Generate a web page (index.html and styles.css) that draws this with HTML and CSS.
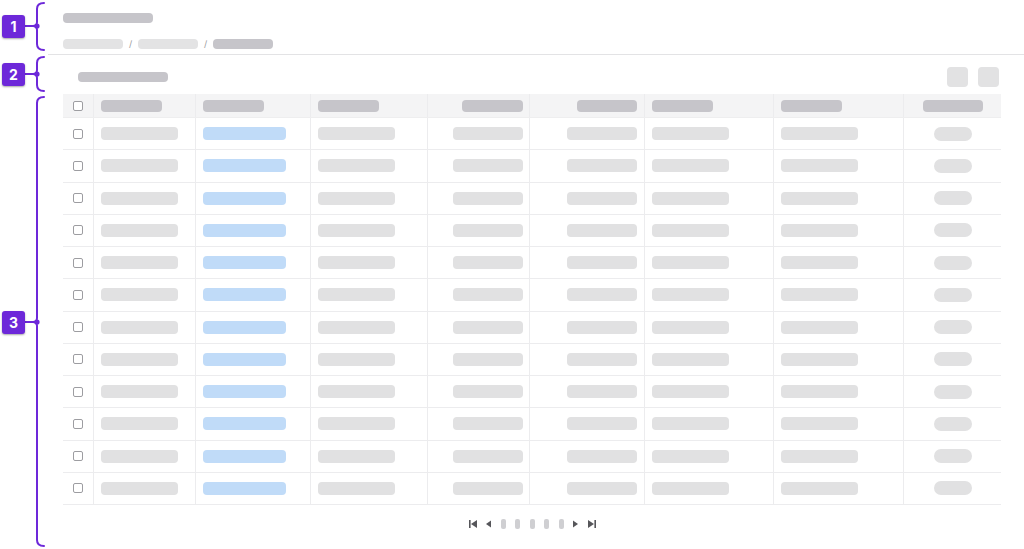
FILE: index.html
```html
<!DOCTYPE html>
<html lang="en">
<head>
<meta charset="utf-8">
<title>Table skeleton</title>
<link rel="stylesheet" href="styles.css">
</head>
<body>
<div class="page">
  <div class="annot">
    <svg class="braces" width="48" height="549" viewBox="0 0 48 549">
      <g fill="none" stroke="#6d28d9" stroke-width="2" stroke-linecap="round">
        <path d="M44 3 Q37 3 37 9 L37 22 Q37 26 33 26 Q37 26 37 30 L37 44 Q37 50 44 50"/>
        <path d="M44 57 Q37 57 37 63 L37 70 Q37 74 33 74 Q37 74 37 78 L37 85 Q37 91 44 91"/>
        <path d="M44 97 Q37 97 37 103 L37 318 Q37 322 33 322 Q37 322 37 326 L37 540 Q37 546 44 546"/>
        <path d="M25 26 H37 M25 74 H37 M25 322 H37"/>
      </g>
      <g fill="#6d28d9">
        <circle cx="37" cy="26" r="2.6"/>
        <circle cx="37" cy="74" r="2.6"/>
        <circle cx="37" cy="322" r="2.6"/>
      </g>
    </svg>
    <span class="badge b1">1</span>
    <span class="badge b2">2</span>
    <span class="badge b3">3</span>
  </div>

  <main class="main">
    <header class="head">
      <div class="sk sk-title"></div>
      <nav class="crumbs">
        <span class="sk crumb"></span><span class="sep">/</span>
        <span class="sk crumb"></span><span class="sep">/</span>
        <span class="sk crumb crumb-cur"></span>
      </nav>
    </header>

    <div class="toolbar">
      <div class="sk sk-tool"></div>
      <div class="tools"><span class="tbtn"></span><span class="tbtn"></span></div>
    </div>

    <div class="table">
      <div class="row hrow">
        <div class="cell c-chk"><span class="chk"></span></div>
        <div class="cell"><span class="sk hp"></span></div>
        <div class="cell"><span class="sk hp"></span></div>
        <div class="cell"><span class="sk hp"></span></div>
        <div class="cell right r4"><span class="sk hp"></span></div>
        <div class="cell right"><span class="sk hp hp60"></span></div>
        <div class="cell"><span class="sk hp"></span></div>
        <div class="cell"><span class="sk hp"></span></div>
        <div class="cell center"><span class="sk hp hp60"></span></div>
      </div>

      <div class="row"><div class="cell c-chk"><span class="chk"></span></div><div class="cell"><span class="sk bp"></span></div><div class="cell"><span class="sk bp blue"></span></div><div class="cell"><span class="sk bp"></span></div><div class="cell right r4"><span class="sk bp num"></span></div><div class="cell right"><span class="sk bp num"></span></div><div class="cell"><span class="sk bp"></span></div><div class="cell"><span class="sk bp"></span></div><div class="cell center"><span class="sk pill"></span></div></div>
      <div class="row"><div class="cell c-chk"><span class="chk"></span></div><div class="cell"><span class="sk bp"></span></div><div class="cell"><span class="sk bp blue"></span></div><div class="cell"><span class="sk bp"></span></div><div class="cell right r4"><span class="sk bp num"></span></div><div class="cell right"><span class="sk bp num"></span></div><div class="cell"><span class="sk bp"></span></div><div class="cell"><span class="sk bp"></span></div><div class="cell center"><span class="sk pill"></span></div></div>
      <div class="row"><div class="cell c-chk"><span class="chk"></span></div><div class="cell"><span class="sk bp"></span></div><div class="cell"><span class="sk bp blue"></span></div><div class="cell"><span class="sk bp"></span></div><div class="cell right r4"><span class="sk bp num"></span></div><div class="cell right"><span class="sk bp num"></span></div><div class="cell"><span class="sk bp"></span></div><div class="cell"><span class="sk bp"></span></div><div class="cell center"><span class="sk pill"></span></div></div>
      <div class="row"><div class="cell c-chk"><span class="chk"></span></div><div class="cell"><span class="sk bp"></span></div><div class="cell"><span class="sk bp blue"></span></div><div class="cell"><span class="sk bp"></span></div><div class="cell right r4"><span class="sk bp num"></span></div><div class="cell right"><span class="sk bp num"></span></div><div class="cell"><span class="sk bp"></span></div><div class="cell"><span class="sk bp"></span></div><div class="cell center"><span class="sk pill"></span></div></div>
      <div class="row"><div class="cell c-chk"><span class="chk"></span></div><div class="cell"><span class="sk bp"></span></div><div class="cell"><span class="sk bp blue"></span></div><div class="cell"><span class="sk bp"></span></div><div class="cell right r4"><span class="sk bp num"></span></div><div class="cell right"><span class="sk bp num"></span></div><div class="cell"><span class="sk bp"></span></div><div class="cell"><span class="sk bp"></span></div><div class="cell center"><span class="sk pill"></span></div></div>
      <div class="row"><div class="cell c-chk"><span class="chk"></span></div><div class="cell"><span class="sk bp"></span></div><div class="cell"><span class="sk bp blue"></span></div><div class="cell"><span class="sk bp"></span></div><div class="cell right r4"><span class="sk bp num"></span></div><div class="cell right"><span class="sk bp num"></span></div><div class="cell"><span class="sk bp"></span></div><div class="cell"><span class="sk bp"></span></div><div class="cell center"><span class="sk pill"></span></div></div>
      <div class="row"><div class="cell c-chk"><span class="chk"></span></div><div class="cell"><span class="sk bp"></span></div><div class="cell"><span class="sk bp blue"></span></div><div class="cell"><span class="sk bp"></span></div><div class="cell right r4"><span class="sk bp num"></span></div><div class="cell right"><span class="sk bp num"></span></div><div class="cell"><span class="sk bp"></span></div><div class="cell"><span class="sk bp"></span></div><div class="cell center"><span class="sk pill"></span></div></div>
      <div class="row"><div class="cell c-chk"><span class="chk"></span></div><div class="cell"><span class="sk bp"></span></div><div class="cell"><span class="sk bp blue"></span></div><div class="cell"><span class="sk bp"></span></div><div class="cell right r4"><span class="sk bp num"></span></div><div class="cell right"><span class="sk bp num"></span></div><div class="cell"><span class="sk bp"></span></div><div class="cell"><span class="sk bp"></span></div><div class="cell center"><span class="sk pill"></span></div></div>
      <div class="row"><div class="cell c-chk"><span class="chk"></span></div><div class="cell"><span class="sk bp"></span></div><div class="cell"><span class="sk bp blue"></span></div><div class="cell"><span class="sk bp"></span></div><div class="cell right r4"><span class="sk bp num"></span></div><div class="cell right"><span class="sk bp num"></span></div><div class="cell"><span class="sk bp"></span></div><div class="cell"><span class="sk bp"></span></div><div class="cell center"><span class="sk pill"></span></div></div>
      <div class="row"><div class="cell c-chk"><span class="chk"></span></div><div class="cell"><span class="sk bp"></span></div><div class="cell"><span class="sk bp blue"></span></div><div class="cell"><span class="sk bp"></span></div><div class="cell right r4"><span class="sk bp num"></span></div><div class="cell right"><span class="sk bp num"></span></div><div class="cell"><span class="sk bp"></span></div><div class="cell"><span class="sk bp"></span></div><div class="cell center"><span class="sk pill"></span></div></div>
      <div class="row"><div class="cell c-chk"><span class="chk"></span></div><div class="cell"><span class="sk bp"></span></div><div class="cell"><span class="sk bp blue"></span></div><div class="cell"><span class="sk bp"></span></div><div class="cell right r4"><span class="sk bp num"></span></div><div class="cell right"><span class="sk bp num"></span></div><div class="cell"><span class="sk bp"></span></div><div class="cell"><span class="sk bp"></span></div><div class="cell center"><span class="sk pill"></span></div></div>
      <div class="row"><div class="cell c-chk"><span class="chk"></span></div><div class="cell"><span class="sk bp"></span></div><div class="cell"><span class="sk bp blue"></span></div><div class="cell"><span class="sk bp"></span></div><div class="cell right r4"><span class="sk bp num"></span></div><div class="cell right"><span class="sk bp num"></span></div><div class="cell"><span class="sk bp"></span></div><div class="cell"><span class="sk bp"></span></div><div class="cell center"><span class="sk pill"></span></div></div>
    </div>

    <div class="pager">
      <svg class="pg-ico" width="8" height="8" viewBox="0 0 8 8"><rect x="0" y="0" width="1.6" height="8"/><polygon points="8,0 2,4 8,8"/></svg>
      <svg class="pg-ico" width="5" height="8" viewBox="0 0 5 8"><polygon points="5,0.5 0,4 5,7.5"/></svg>
      <span class="pg-num"></span>
      <span class="pg-num"></span>
      <span class="pg-num"></span>
      <span class="pg-num"></span>
      <span class="pg-num"></span>
      <svg class="pg-ico" width="5" height="8" viewBox="0 0 5 8"><polygon points="0,0.5 5,4 0,7.5"/></svg>
      <svg class="pg-ico" width="8" height="8" viewBox="0 0 8 8"><polygon points="0,0 6,4 0,8"/><rect x="6.4" y="0" width="1.6" height="8"/></svg>
    </div>
  </main>
</div>
</body>
</html>
```

FILE: styles.css
```css
* { box-sizing: border-box; }

html, body {
  margin: 0;
  padding: 0;
  background: #ffffff;
  font-family: "Inter", "Liberation Sans", sans-serif;
}

.page {
  position: relative;
  width: 1024px;
  height: 549px;
  overflow: hidden;
}

/* ---------- annotation layer ---------- */
.annot {
  position: absolute;
  left: 0;
  top: 0;
  width: 48px;
  height: 549px;
}
.braces { display: block; }
.badge {
  position: absolute;
  left: 2px;
  width: 23px;
  height: 23px;
  border-radius: 3px;
  background: #6d28d9;
  color: #ffffff;
  font-size: 14px;
  font-weight: 700;
  line-height: 23px;
  text-align: center;
  box-shadow: 0 1px 2px rgba(0, 0, 0, 0.35);
}
.b1 { top: 15px; }
.b2 { top: 63px; }
.b3 { top: 311px; }

/* ---------- main ---------- */
.main {
  margin-left: 48px;
  width: 976px;
}

.sk {
  display: block;
  border-radius: 4px;
  background: #e2e2e3;
}

.head {
  padding: 13px 0 5px 15px;
  border-bottom: 1px solid #e3e3e5;
}
.sk-title {
  width: 90px;
  height: 10px;
  background: #c6c5ca;
}
.crumbs {
  display: flex;
  align-items: center;
  gap: 5px;
  margin-top: 16px;
  height: 10px;
}
.crumb {
  width: 60px;
  height: 10px;
  background: #e3e3e4;
}
.crumb-cur { background: #c6c5ca; }
.sep {
  width: 5px;
  font-size: 9px;
  line-height: 10px;
  color: #9a9a9e;
  text-align: center;
}

.toolbar {
  display: flex;
  align-items: center;
  justify-content: space-between;
  padding: 12px 25px 7px 30px;
}
.sk-tool {
  width: 90px;
  height: 10px;
  background: #c6c5ca;
}
.tools {
  display: flex;
  gap: 10px;
}
.tbtn {
  width: 21px;
  height: 20px;
  border-radius: 4px;
  background: #e2e2e3;
}

/* ---------- table ---------- */
.table {
  margin-left: 15px;
  width: 938px;
}
.row {
  display: grid;
  grid-template-columns: 30px 102px 115px 117px 102px 115px 129px 130px 98px;
  height: 32.25px;
  border-bottom: 1px solid #ececee;
}
.hrow {
  height: 24px;
  background: #f4f4f5;
  border-bottom: 1px solid #eeeeef;
}
.cell {
  display: flex;
  align-items: center;
  padding: 0 7px;
  border-left: 1px solid #ececee;
}
.cell.c-chk {
  border-left: none;
  padding: 0;
  justify-content: center;
}
.cell.right { justify-content: flex-end; }
.cell.r4 { padding-right: 6px; }
.cell.center { justify-content: center; padding: 0; }

.chk {
  width: 10px;
  height: 10px;
  border: 1px solid #9d9da1;
  border-radius: 2px;
  background: #ffffff;
}

.hp {
  width: 61px;
  height: 12px;
  background: #c6c5ca;
}
.hp60 { width: 60px; }
.bp {
  width: 77px;
  height: 13px;
  background: #e1e1e2;
}
.bp.blue {
  width: 83px;
  background: #c0dbf8;
}
.bp.num { width: 70px; }
.pill {
  width: 38px;
  height: 14px;
  border-radius: 7px;
  background: #e1e1e2;
}

/* ---------- pager ---------- */
.pager {
  display: flex;
  align-items: center;
  justify-content: center;
  gap: 9.5px;
  margin: 14px 0 0 15px;
  width: 938px;
  height: 10px;
}
.pg-ico {
  display: block;
  fill: #56565a;
}
.pg-num {
  width: 5px;
  height: 10px;
  border-radius: 2px;
  background: #cfcfd2;
}
```
